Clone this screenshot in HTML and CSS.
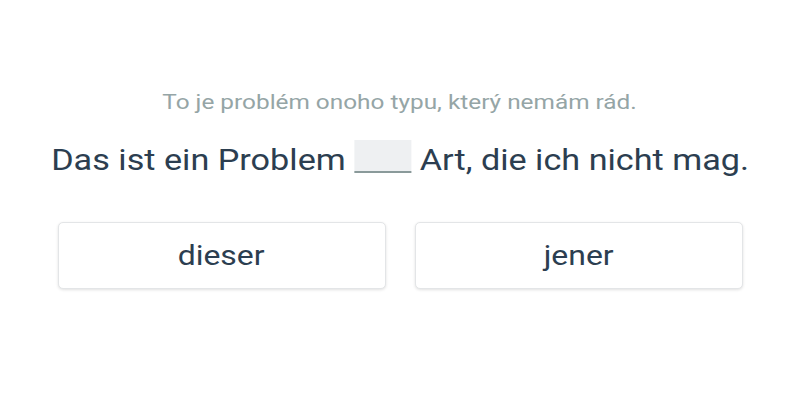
FILE: index.html
```html
<!DOCTYPE html>
<html>
<head>
<meta charset="utf-8">
<link rel="stylesheet" href="styles.css">
</head>
<body>
<div class="card">
  <p class="hint"><span class="wide">To je problém onoho typu, který nemám rád.</span></p>
  <p class="sentence"><span class="wide">Das ist ein Problem <span class="blank"></span> Art, die ich nicht mag.</span></p>
  <div class="options">
    <button class="opt"><span class="wide">dieser</span></button>
    <button class="opt"><span class="wide">jener</span></button>
  </div>
</div>
</body>
</html>
```
FILE: styles.css
```css
html, body { margin: 0; padding: 0; background: #fff; }
body { font-family: Roboto, "Noto Sans", sans-serif; }
.card {
  width: 800px;
  height: 400px;
  display: flex;
  flex-direction: column;
  align-items: center;
  padding-top: 88px;
  box-sizing: border-box;
}
.wide {
  display: inline-block;
  transform: scaleX(1.14);
}
.hint {
  margin: 0;
  font-size: 21px;
  line-height: 28px;
  color: #95a5a6;
}
.hint .wide { transform: scaleX(1.16); }
.sentence {
  margin: 24px 0 0 0;
  font-size: 30px;
  line-height: 40px;
  color: #2c3e50;
}
.blank {
  display: inline-block;
  width: 50px;
  height: 31px;
  background: #eef0f2;
  border-bottom: 2px solid #8a9a9a;
  vertical-align: -3px;
}
.options {
  display: flex;
  gap: 29px;
  margin-top: 42px;
}
.opt {
  width: 328px;
  height: 67px;
  background: #fff;
  border: 1px solid #e3e5e7;
  border-radius: 5px;
  box-shadow: 0 1px 3px rgba(0,0,0,0.12);
  font-family: Roboto, "Noto Sans", sans-serif;
  font-size: 28px;
  color: #2c3e50;
  padding: 0;
}
```
